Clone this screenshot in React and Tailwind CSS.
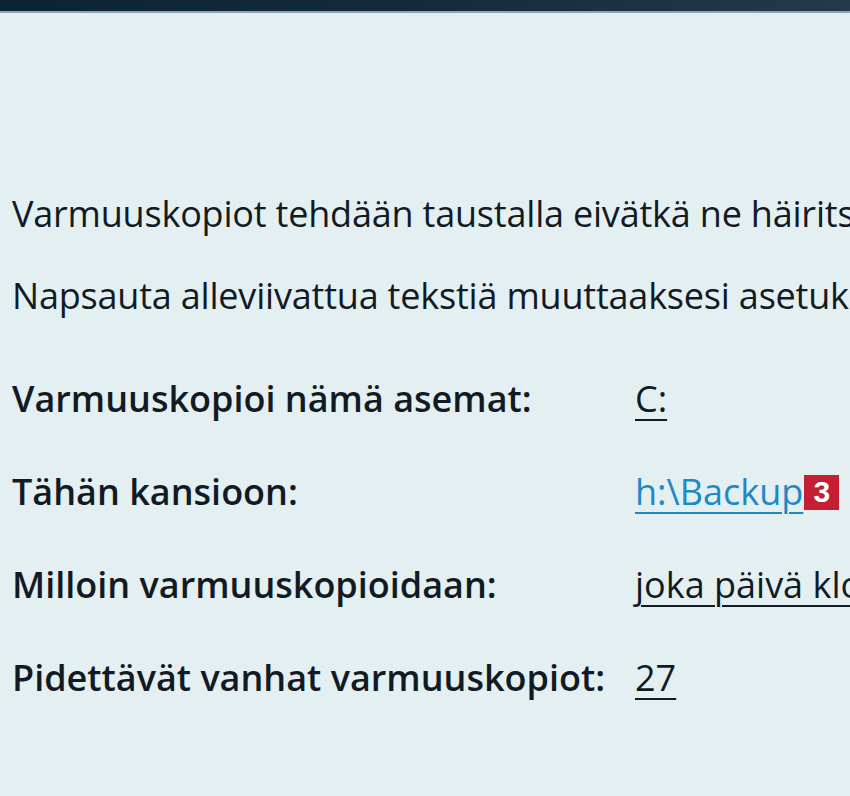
export default function App() {
  const rows = [
    { label: 'Varmuuskopioi nämä asemat:', value: 'C:' },
    { label: 'Tähän kansioon:', value: 'h:\\Backup', link: true, badge: '3' },
    { label: 'Milloin varmuuskopioidaan:', value: 'joka päivä klo 12.00' },
    { label: 'Pidettävät vanhat varmuuskopiot:', value: '27' },
  ];

  return (
    <div className="w-[850px] h-[796px] overflow-hidden bg-[#e4eff2] font-['Open_Sans',sans-serif] text-[#121b23]">
      {/* Title bar */}
      <div className="h-[11px] bg-gradient-to-r from-[#0b2434] via-[#132b3b] to-[#243a4c]" />
      <div className="h-[2px] bg-[#8fa3b0]" />

      <div className="pl-3 pt-[177px] whitespace-nowrap overflow-hidden">
        <p className="text-[36px] leading-[48px] tracking-[-0.2px]">Varmuuskopiot tehdään taustalla eivätkä ne häiritse työskentelyä.</p>
        <p className="mt-[34px] text-[36px] leading-[48px] tracking-[-0.2px]">Napsauta alleviivattua tekstiä muuttaaksesi asetuksia.</p>

        <div className="mt-[55px] flex flex-col gap-[45px]">
          {rows.map((row) => (
            <div key={row.label} className="grid grid-cols-[623px_1fr] items-center text-[36px] leading-[48px]">
              <span className="font-semibold">{row.label}</span>
              <span className="flex items-center">
                <span
                  className={
                    row.link
                      ? 'underline underline-offset-[7px] decoration-2 text-[#1f88c6] decoration-[#1f88c6]'
                      : 'underline underline-offset-[7px] decoration-2'
                  }
                >
                  {row.value}
                </span>
                {row.badge && (
                  <span className="ml-[1px] flex h-[35px] w-[35px] items-center justify-center bg-[#c41f32] text-[30px] font-bold text-white font-['Liberation_Sans',sans-serif]">
                    {row.badge}
                  </span>
                )}
              </span>
            </div>
          ))}
        </div>
      </div>
    </div>
  );
}
